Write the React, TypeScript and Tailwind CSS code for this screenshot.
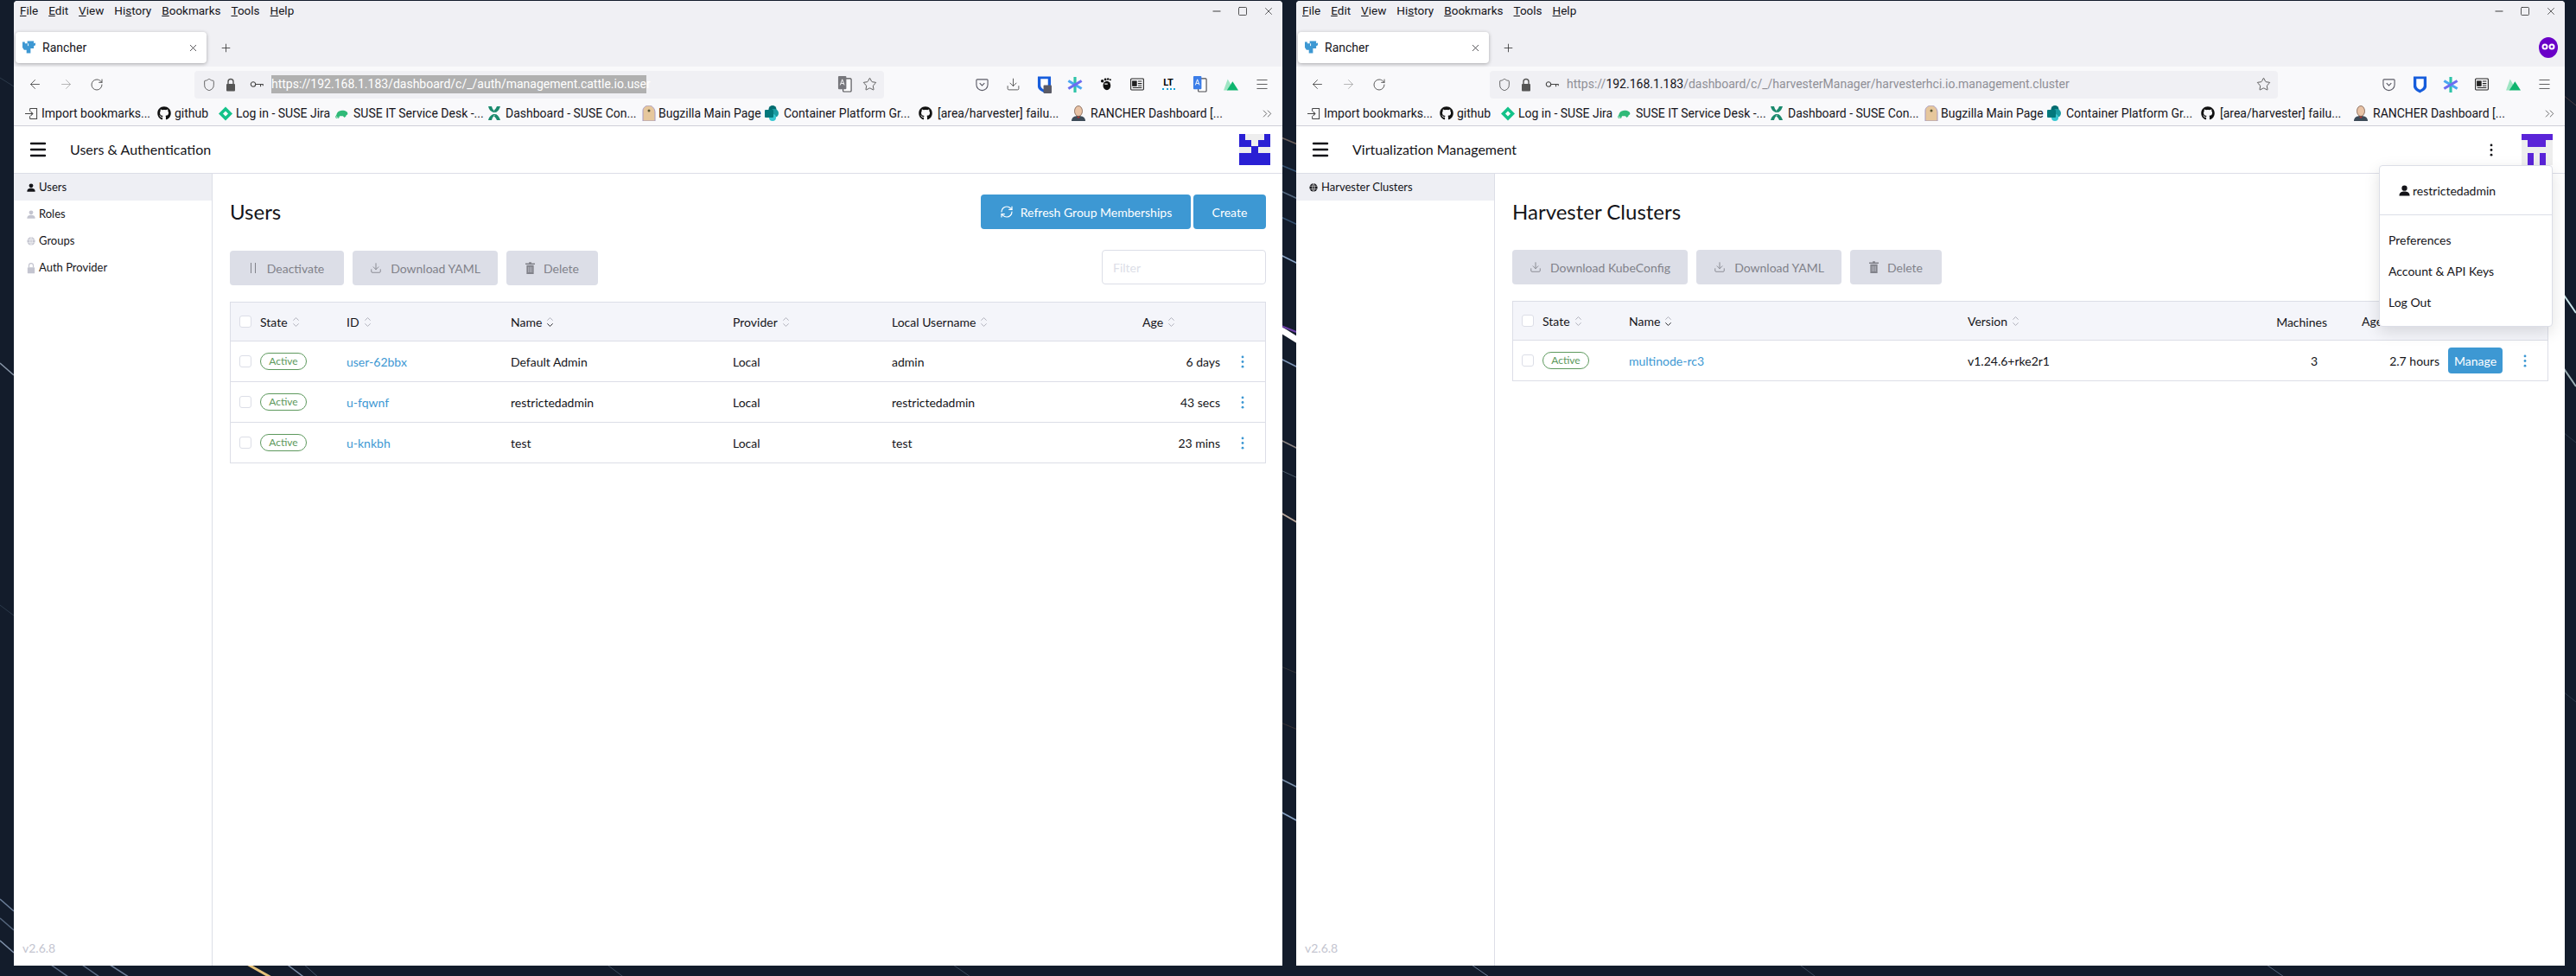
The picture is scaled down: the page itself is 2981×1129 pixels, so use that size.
import type { ReactNode } from 'react'
import { ArrowLeft, ArrowRight, RotateCw, Shield, Star, Download, X, Plus, Minus, Square, ChevronsRight, Menu, RefreshCw } from 'lucide-react'
import { FaGithub } from 'react-icons/fa'

const STREAKS = [
  // middle gap
  [1480, 158, 1504, 168, '#6b5f5c', 1.5], [1480, 190, 1504, 200, '#34506f', 1.5], [1480, 220, 1504, 231, '#54677e', 1.5],
  [1480, 250, 1504, 261, '#34506f', 1.5], [1480, 294, 1504, 306, '#8aa4c6', 1.5], [1480, 380, 1504, 395, '#ffffff', 7],
  [1480, 376, 1500, 384, '#6d3fa8', 2], [1480, 414, 1504, 426, '#7f97b8', 1.5], [1480, 508, 1504, 520, '#8d8584', 1.5],
  [1480, 543, 1504, 554, '#4b5a68', 1], [1480, 592, 1504, 606, '#b9a79c', 2], [1480, 900, 1504, 912, '#7c92ad', 1.5],
  [1480, 938, 1504, 951, '#8aa4c6', 1.5], [1480, 770, 1504, 780, '#33343a', 1], [1480, 835, 1504, 845, '#3a3335', 1],
  // left edge
  [0, 420, 16, 434, '#8896a8', 1.5], [0, 90, 16, 100, '#2c3a4a', 1], [0, 700, 16, 712, '#2c3a4a', 1],
  [0, 1040, 16, 1054, '#6c7f9a', 1.5], [0, 1062, 16, 1076, '#55667d', 1.5], [0, 1088, 16, 1102, '#8192ab', 1.5],
  // right edge
  [2966, 340, 2981, 362, '#c9e4e8', 2], [2966, 425, 2981, 447, '#9db0b5', 2], [2966, 110, 2981, 122, '#4a3d42', 1],
  [2966, 500, 2981, 512, '#2c3a4a', 1], [2966, 800, 2981, 812, '#2c3a4a', 1],
  // bottom edge
  [56, 1114, 82, 1132, '#5b6c85', 1.5], [92, 1114, 118, 1132, '#5b6c85', 1.5], [124, 1114, 152, 1132, '#6d7e97', 1.5],
  [284, 1114, 316, 1132, '#e5c27a', 3], [330, 1114, 354, 1132, '#7d8fa8', 1.5], [350, 1114, 370, 1132, '#44546a', 1],
  [700, 1114, 724, 1132, '#3c4a5c', 1], [1100, 1114, 1126, 1132, '#3c4a5c', 1], [1700, 1114, 1726, 1132, '#6d7e97', 1],
  [2080, 1114, 2104, 1132, '#3c4a5c', 1], [2620, 1114, 2646, 1132, '#55667d', 1],
] as const

const MENU = [
  ['', 'F', 'ile'],
  ['', 'E', 'dit'],
  ['', 'V', 'iew'],
  ['Hi', 's', 'tory'],
  ['', 'B', 'ookmarks'],
  ['', 'T', 'ools'],
  ['', 'H', 'elp'],
]

function Wallpaper() {
  return (
    <svg className="absolute inset-0" width="2981" height="1129" aria-hidden="true">
      {STREAKS.map(([x1, y1, x2, y2, color, width], i) => (
        <line key={i} x1={x1} y1={y1} x2={x2} y2={y2} stroke={color} strokeWidth={width} />
      ))}
    </svg>
  )
}

function Person({ className = '' }: { className?: string }) {
  return (
    <svg viewBox="0 0 14 14" className={className} fill="currentColor" aria-hidden="true">
      <circle cx="7" cy="4" r="3.4" />
      <path d="M0.5 13.5 C0.5 9.5 3.5 8.2 7 8.2 C10.5 8.2 13.5 9.5 13.5 13.5 Z" />
    </svg>
  )
}

function GlobeIcon({ className = '' }: { className?: string }) {
  return (
    <svg viewBox="0 0 14 14" className={className} fill="currentColor" aria-hidden="true">
      <circle cx="7" cy="7" r="6.5" />
      <path d="M0.5 4.6H13.5M0.5 9.4H13.5M7 .5V13.5M7 .5C4 3.5 4 10.5 7 13.5M7 .5C10 3.5 10 10.5 7 13.5" stroke="#fff" strokeWidth=".7" fill="none" />
    </svg>
  )
}

function LockIcon({ className = '' }: { className?: string }) {
  return (
    <svg viewBox="0 0 12 16" className={className} fill="currentColor" aria-hidden="true">
      <rect x="1" y="7" width="10" height="8.5" rx="1" />
      <path d="M3 7V4.5a3 3 0 0 1 6 0V7" fill="none" stroke="currentColor" strokeWidth="1.4" />
    </svg>
  )
}

function TrashIcon() {
  return (
    <svg viewBox="0 0 12 15" className="mr-[10px] h-[14px] w-[11px]" fill="currentColor" aria-hidden="true">
      <path d="M4.500 0h3v1.500H12V3H0V1.500h4.500ZM1.500 4h9v11h-9Z" />
      <path d="M4 6v7M6 6v7M8 6v7" stroke="#dcdee7" strokeWidth=".6" />
    </svg>
  )
}

function PauseIcon() {
  return (
    <svg viewBox="0 0 8 12" className="mr-[12px] h-[12px] w-[8px]" stroke="currentColor" strokeWidth="1" aria-hidden="true">
      <path d="M1.500 0v12M6.500 0v12" />
    </svg>
  )
}

function RancherFavicon() {
  return (
    <svg viewBox="0 0 16 18" className="h-[18px] w-[15px] shrink-0" aria-hidden="true">
      <path d="M0 2h3v2h3V1h8v3l2-1v3l-2 1v3H10v6H5v-4H2L0 9Z" fill="#3d98d3" />
      <path d="M7 4v3" stroke="#fff" strokeWidth="1" />
    </svg>
  )
}

function TranslateIcon({ blue = false }: { blue?: boolean }) {
  return (
    <svg viewBox="0 0 18 22" className="h-[21px] w-[17px]" aria-hidden="true">
      <rect x="7" y="4" width="10" height="16" rx="1" fill="#fff" stroke="#4a4a4f" strokeWidth="1.2" />
      <rect x="1" y="1" width="10" height="16" rx="1" fill={blue ? '#3b7de8' : '#77777c'} />
      <path d="M3.5 12 6 5l2.5 7M4.5 10h3" stroke="#fff" strokeWidth="1" fill="none" />
    </svg>
  )
}

function Bitwarden({ locked = false }: { locked?: boolean }) {
  return (
    <svg viewBox="0 0 18 22" className="h-[23px] w-[17px]" aria-hidden="true">
      <path d="M1 1.5h16v12c0 4-4 6-8 8-4-2-8-4-8-8Z" fill="#175ddc" />
      <path d="M4.5 4.5h9v8c0 2.5-2.5 4-4.5 5-2-1-4.5-2.5-4.5-5Z" fill="#fff" />
      {locked && <rect x="8" y="12" width="10" height="10" rx="1" fill="#5b5b66" />}
    </svg>
  )
}

function Asterisk() {
  return (
    <svg viewBox="0 0 20 20" className="h-5 w-[18px]" aria-hidden="true">
      <path d="M10 0v20" stroke="#2fc4a8" strokeWidth="3.5" />
      <path d="M1.5 5 18.5 15" stroke="#4aa8f0" strokeWidth="3.5" />
      <path d="M18.5 5 1.5 15" stroke="#6c6cf0" strokeWidth="3.5" />
    </svg>
  )
}

function Footprint() {
  return (
    <svg viewBox="0 0 16 20" className="h-5 w-[14px]" fill="#111" aria-hidden="true">
      <ellipse cx="9" cy="11" rx="5" ry="6" />
      <circle cx="3" cy="5" r="2" /><circle cx="7" cy="3" r="1.6" /><circle cx="10.5" cy="2.5" r="1.4" /><circle cx="13.5" cy="3.5" r="1.2" />
      <path d="M6 9h4" stroke="#fff" strokeWidth="1.5" />
    </svg>
  )
}

function Reader() {
  return (
    <svg viewBox="0 0 18 16" className="h-[15px] w-[16px]" fill="none" stroke="#222" strokeWidth="1.2" aria-hidden="true">
      <rect x=".7" y=".7" width="16.6" height="14.6" rx="1" />
      <rect x="3" y="4" width="5" height="6" fill="#222" />
      <path d="M10 4h5M10 7h5M10 10h5M3 12.5h12" />
    </svg>
  )
}

function Triangles() {
  return (
    <svg viewBox="0 0 18 14" className="h-[14px] w-[17px]" aria-hidden="true">
      <path d="M5 0 9 7 5 14H0Z" fill="#9fe6c4" />
      <path d="M11 3 18 14H4Z" fill="#0fb56f" />
    </svg>
  )
}

function Pocket() {
  return (
    <svg viewBox="0 0 16 16" className="h-[16px] w-[15px]" fill="none" stroke="#5b5b66" strokeWidth="1.2" aria-hidden="true">
      <path d="M2 1.5h12a1 1 0 0 1 1 1V8a7 7 0 0 1-14 0V2.500a1 1 0 0 1 1-1Z" />
      <path d="M5 6l3 3 3-3" />
    </svg>
  )
}

function Confluence() {
  return (
    <svg viewBox="0 0 16 18" className="h-[18px] w-[16px] shrink-0" aria-hidden="true">
      <path d="M1 1h4c1 4 3 5 5 7h-3C4 7 2 5 1 1ZM15 1h-4C10 3 9 5 7 6l3 2c3-2 4-4 5-7ZM1 17h4c1-4 3-5 5-7H7c-3 1-5 3-6 7ZM15 17h-4c-1-2-2-4-4-5l3-2c3 2 4 4 5 7Z" fill="#1a8a6d" />
    </svg>
  )
}

const BOOKMARKS: { label: string; width: string; icon: ReactNode; gap: string }[] = [
  {
    label: 'Import bookmarks...',
    width: 'w-[153px]',
    gap: 'gap-[4px]',
    icon: (
      <svg viewBox="0 0 16 16" className="h-[15px] w-[15px] shrink-0" fill="none" stroke="#444" strokeWidth="1.1" aria-hidden="true">
        <path d="M6 1.500h8.500v13H6M6 5V1.500M6 11v3.500M0 8h9.500M7 5.500 9.500 8 7 10.500" />
      </svg>
    ),
  },
  { label: 'github', width: 'w-[71px]', gap: 'gap-[4px]', icon: <FaGithub className="h-4 w-4 shrink-0 text-[#111]" /> },
  {
    label: 'Log in - SUSE Jira',
    width: 'w-[134px]',
    gap: 'gap-[4px]',
    icon: (
      <svg viewBox="0 0 16 16" className="h-[17px] w-4 shrink-0" aria-hidden="true">
        <path d="M8 0l8 8-8 8-8-8Z" fill="#14c28a" />
        <path d="M8 5l3 3-3 3-3-3Z" fill="#fff" />
      </svg>
    ),
  },
  {
    label: 'SUSE IT Service Desk -...',
    width: 'w-[177px]',
    gap: 'gap-[6px]',
    icon: (
      <svg viewBox="0 0 16 12" className="h-[11px] w-4 shrink-0" aria-hidden="true">
        <path d="M2 10C1 6 4 2 9 2s7 2 7 4-2 1-2 3l-2 2-2-2H6l-2 2Z" fill="#30ba78" />
        <circle cx="3" cy="10" r="2" fill="none" stroke="#30ba78" />
      </svg>
    ),
  },
  { label: 'Dashboard - SUSE Con...', width: 'w-[179px]', gap: 'gap-[5px]', icon: <Confluence /> },
  {
    label: 'Bugzilla Main Page',
    width: 'w-[142px]',
    gap: 'gap-[3px]',
    icon: (
      <svg viewBox="0 0 16 18" className="h-[18px] w-4 shrink-0" aria-hidden="true">
        <path d="M1 18 1 6C1 2 5 0 8 0s7 3 7 8v10Z" fill="#e6c79c" stroke="#a79ac0" />
        <circle cx="8" cy="6" r="1.500" fill="#553" />
      </svg>
    ),
  },
  {
    label: 'Container Platform Gr...',
    width: 'w-[178px]',
    gap: 'gap-[6px]',
    icon: (
      <svg viewBox="0 0 16 18" className="h-[18px] w-4 shrink-0" aria-hidden="true">
        <circle cx="9" cy="4.500" r="4.500" fill="#036c70" />
        <circle cx="11" cy="9" r="5" fill="#1a9ba1" />
        <circle cx="9" cy="14" r="4" fill="#37c6d0" />
        <rect x="0" y="5" width="10" height="9" rx="1" fill="#03787c" />
      </svg>
    ),
  },
  { label: '[area/harvester] failu...', width: 'w-[177px]', gap: 'gap-[6px]', icon: <FaGithub className="h-4 w-4 shrink-0 text-[#111]" /> },
  {
    label: 'RANCHER Dashboard [...',
    width: 'w-[217px]',
    gap: 'gap-[6px]',
    icon: (
      <svg viewBox="0 0 16 18" className="h-[18px] w-4 shrink-0" aria-hidden="true">
        <path d="M0 18c0-4 3-6 8-6s8 2 8 6Z" fill="#3d4b58" />
        <ellipse cx="8" cy="6.500" rx="4.500" ry="6" fill="#e8c3a6" stroke="#6b4a3a" strokeWidth=".7" />
        <path d="M6 13h4l-2 2Z" fill="#b03030" />
      </svg>
    ),
  },
]

function ToolbarIcon({ children }: { children: ReactNode }) {
  return <div className="flex h-8 w-9 shrink-0 items-center justify-center">{children}</div>
}

function BrowserChrome({ side }: { side: 'left' | 'right' }) {
  const left = side === 'left'
  return (
    <div className="font-['Roboto',sans-serif] text-[#15141a]">
      {/* title bar and tab strip */}
      <div className="relative h-[76px] rounded-t bg-[#f0f0f4]">
        <div className="flex h-6 items-center gap-[12px] pl-[7px] text-[13.5px] leading-none">
          {MENU.map(([before, key, after]) => (
            <span key={before + key + after}>
              {before}
              <u>{key}</u>
              {after}
            </span>
          ))}
          <div className="ml-auto mr-[9px] flex items-center gap-[17px] text-[#222]">
            <Minus size={14} strokeWidth={1.5} />
            <Square size={12} strokeWidth={1.5} />
            <X size={14} strokeWidth={1.2} />
          </div>
        </div>
        <div className="mt-3 flex items-center">
          <div className="ml-[2px] flex h-9 w-[221px] items-center rounded bg-white pl-[8px] pr-[9px] text-[14px] shadow-[0_1px_4px_rgba(0,0,0,0.3)]">
            <RancherFavicon />
            <span className="ml-[8px]">Rancher</span>
            <X size={13} strokeWidth={1.3} className="ml-auto" />
          </div>
          <Plus size={15} strokeWidth={1.3} className="ml-[15px] text-[#333]" />
          {!left && (
            <svg viewBox="0 0 22 24" className="ml-auto mr-[8px] h-6 w-[22px]" aria-hidden="true">
              <ellipse cx="11" cy="12" rx="11" ry="12" fill="#6a00c8" />
              <circle cx="7" cy="11" r="3.500" fill="#fff" />
              <circle cx="15" cy="11" r="3.500" fill="#fff" />
              <circle cx="7" cy="11" r="1.500" fill="#6a00c8" />
              <circle cx="15" cy="11" r="1.500" fill="#6a00c8" />
            </svg>
          )}
        </div>
      </div>

      {/* nav bar */}
      <div className="flex h-[40px] items-center bg-[#f9f9fb] pl-[6px] pr-[6px] pt-[1px]">
        <ToolbarIcon><ArrowLeft size={17} strokeWidth={1.2} className="text-[#444]" /></ToolbarIcon>
        <ToolbarIcon><ArrowRight size={17} strokeWidth={1.2} className="text-[#aaa]" /></ToolbarIcon>
        <ToolbarIcon><RotateCw size={16} strokeWidth={1.3} className="text-[#444]" /></ToolbarIcon>
        <div className={`${left ? 'ml-[95px] w-[798px]' : 'ml-[110px] w-[912px]'} flex h-8 items-center rounded bg-[#f0f0f4] text-[14px]`}>
          <Shield size={16} strokeWidth={1.2} className="ml-[9px] text-[#444]" />
          <LockIcon className="ml-[11px] h-[16px] w-[12px] text-[#555]" />
          <svg viewBox="0 0 18 10" className="ml-[16px] h-[9px] w-[17px]" fill="none" stroke="#444" strokeWidth="1.2" aria-hidden="true">
            <circle cx="4" cy="5" r="3" />
            <path d="M7 5h10M13.500 5v3M16.500 5v2" />
          </svg>
          {left ? (
            <span className="ml-[8px] w-[434px] whitespace-nowrap bg-[#b0b0b0] text-white">https://192.168.1.183/dashboard/c/_/auth/management.cattle.io.user</span>
          ) : (
            <span className="ml-[8px] w-[578px] whitespace-nowrap text-[#8f8f96]">
              https://<span className="text-[#15141a]">192.168.1.183</span>/dashboard/c/_/harvesterManager/harvesterhci.io.management.cluster
            </span>
          )}
          <div className="ml-auto mr-[8px] flex items-center gap-[12px]">
            {left && <TranslateIcon />}
            <Star size={17} strokeWidth={1.2} className="text-[#444]" />
          </div>
        </div>
        <div className="ml-auto flex items-center">
          <ToolbarIcon><Pocket /></ToolbarIcon>
          {left && <ToolbarIcon><Download size={17} strokeWidth={1.2} className="text-[#444]" /></ToolbarIcon>}
          <ToolbarIcon><Bitwarden locked={left} /></ToolbarIcon>
          <ToolbarIcon><Asterisk /></ToolbarIcon>
          {left && <ToolbarIcon><Footprint /></ToolbarIcon>}
          <ToolbarIcon><Reader /></ToolbarIcon>
          {left && (
            <ToolbarIcon>
              <div className="flex flex-col items-center text-[11px] font-bold leading-[10px] text-black">
                LT
                <span className="h-[3px] w-[15px] border-b-2 border-dotted border-[#1aa3d8]" />
              </div>
            </ToolbarIcon>
          )}
          {left && <ToolbarIcon><TranslateIcon blue /></ToolbarIcon>}
          <ToolbarIcon><Triangles /></ToolbarIcon>
          <ToolbarIcon><Menu size={17} strokeWidth={1.2} className="text-[#444]" /></ToolbarIcon>
        </div>
      </div>

      {/* bookmarks bar */}
      <div className="flex h-[29px] items-center border-b border-[#cfcfd8] bg-[#f9f9fb] pl-[13px] text-[14px]">
        {BOOKMARKS.map((b) => (
          <div key={b.label} className={`${b.width} ${b.gap} flex shrink-0 items-center whitespace-nowrap`}>
            {b.icon}
            <span>{b.label}</span>
          </div>
        ))}
        <ChevronsRight size={17} strokeWidth={1.1} className="ml-auto mr-[9px] text-[#444]" />
      </div>
    </div>
  )
}

function Btn({ icon, children, className }: { icon?: ReactNode; children: ReactNode; className: string }) {
  return (
    <button type="button" className={`flex h-10 items-center justify-center rounded bg-[#dcdee7] text-[14px] text-[#81828a] ${className}`}>
      {icon}
      {children}
    </button>
  )
}

function SortIcon({ active = false }: { active?: boolean }) {
  return (
    <svg viewBox="0 0 10 14" className="ml-[5px] h-[13px] w-[9px] shrink-0" fill="none" strokeWidth="1" aria-hidden="true">
      <path d="M1.500 5 5 1.500 8.500 5" stroke="#a9aab5" />
      <path d="M1.500 9 5 12.500 8.500 9" stroke={active ? '#141419' : '#a9aab5'} />
    </svg>
  )
}

function Head({ label, active }: { label: string; active?: boolean }) {
  return (
    <div className="flex items-center">
      {label}
      <SortIcon active={active} />
    </div>
  )
}

function Check() {
  return (
    <div className="flex items-center pl-[10px]">
      <div className="h-[14px] w-[14px] rounded-[3px] border border-[#dcdee7] bg-white" />
    </div>
  )
}

function ActiveBadge() {
  return (
    <div className="flex h-5 w-[54px] items-center justify-center rounded-[10px] border border-[#5d995d] text-[12px] leading-none text-[#5d995d]">
      Active
    </div>
  )
}

function Kebab() {
  return (
    <svg viewBox="0 0 4 16" className="h-[15px] w-[4px]" fill="currentColor" aria-hidden="true">
      <circle cx="2" cy="2" r="1.500" />
      <circle cx="2" cy="8" r="1.500" />
      <circle cx="2" cy="14" r="1.500" />
    </svg>
  )
}

const USER_ROWS = [
  { id: 'user-62bbx', name: 'Default Admin', username: 'admin', age: '6 days' },
  { id: 'u-fqwnf', name: 'restrictedadmin', username: 'restrictedadmin', age: '43 secs' },
  { id: 'u-knkbh', name: 'test', username: 'test', age: '23 mins' },
]

const USER_COLS = 'grid grid-cols-[34px_100px_190px_257px_184px_290px_90px_52px] items-center'
const CLUSTER_COLS = 'grid grid-cols-[34px_100px_392px_200px_256px_90px_125px] items-center'

function SideItem({ label, icon, active, muted }: { label: string; icon: ReactNode; active?: boolean; muted?: boolean }) {
  return (
    <div className={`flex h-[31px] items-center pl-[15px] pt-[1px] text-[13px] ${active ? 'bg-[#eeeff4]' : ''} ${muted ? 'text-[#c4c5d0]' : 'text-[#141419]'}`}>
      {icon}
      <span className="ml-[4px] text-[#141419]">{label}</span>
    </div>
  )
}

function RancherHeader({ title, children }: { title: string; children: ReactNode }) {
  return (
    <div className="flex h-[55px] items-center border-b border-[#dcdee7] bg-white">
      <Menu size={24} strokeWidth={2.4} className="ml-[16px] text-[#141419]" />
      <span className="ml-[25px] text-[16px]">{title}</span>
      {children}
    </div>
  )
}

function Shell({ children, sidebar, header, side }: { children: ReactNode; sidebar: ReactNode; header: ReactNode; side: 'left' | 'right' }) {
  return (
    <div className="relative flex h-[1116px] w-[1468px] shrink-0 flex-col overflow-hidden rounded-t bg-white">
      <BrowserChrome side={side} />
      <div className="flex min-h-0 flex-1 flex-col font-['Lato',sans-serif] text-[#141419]">
        {header}
        <div className="flex min-h-0 flex-1">
          <div className="relative w-[230px] shrink-0 border-r border-[#dcdee7]">
            {sidebar}
            <span className="absolute bottom-[10px] left-[10px] text-[14px] text-[#c4c5d0]">v2.6.8</span>
          </div>
          <div className="min-w-0 flex-1 pl-[20px] pr-[18px]">{children}</div>
        </div>
      </div>
    </div>
  )
}

function UsersWindow() {
  return (
    <Shell
      side="left"
      header={
        <RancherHeader title="Users & Authentication">
          <svg viewBox="0 0 36 36" className="ml-auto mr-[14px] h-9 w-9" aria-hidden="true">
            <rect width="36" height="36" fill="#2a20d4" />
            <path d="M7 0H29V7H22V14H14V7H7Z" fill="#eeeeee" />
            <rect y="15" width="14" height="7" fill="#eeeeee" />
            <rect x="22" y="15" width="14" height="7" fill="#eeeeee" />
          </svg>
        </RancherHeader>
      }
      sidebar={
        <>
          <SideItem active label="Users" icon={<Person className="h-[10px] w-[10px]" />} />
          <SideItem muted label="Roles" icon={<Person className="h-[10px] w-[10px]" />} />
          <SideItem muted label="Groups" icon={<GlobeIcon className="h-[10px] w-[10px]" />} />
          <SideItem muted label="Auth Provider" icon={<LockIcon className="h-[14px] w-[10px]" />} />
        </>
      }
    >
      <div className="mt-[24px] flex h-10 items-center">
        <h1 className="text-[24px] font-normal">Users</h1>
        <div className="ml-auto mr-[1px] flex gap-[3px]">
          <button type="button" className="flex h-10 w-[243px] items-center justify-center rounded bg-[#3d98d3] text-[14px] text-white">
            <RefreshCw size={16} strokeWidth={1.8} className="mr-[8px]" />
            Refresh Group Memberships
          </button>
          <button type="button" className="h-10 w-[84px] rounded bg-[#3d98d3] text-[14px] text-white">Create</button>
        </div>
      </div>
      <div className="mt-[25px] flex items-center">
        <Btn className="w-[132px]" icon={<PauseIcon />}>Deactivate</Btn>
        <Btn className="ml-[10px] w-[168px]" icon={<Download size={14} strokeWidth={1.5} className="mr-[10px]" />}>Download YAML</Btn>
        <Btn className="ml-[10px] w-[106px]" icon={<TrashIcon />}>Delete</Btn>
        <input
          placeholder="Filter"
          className="ml-auto mr-[1px] h-10 w-[190px] -translate-y-px rounded border border-[#dcdee7] px-3 text-[14px] outline-none placeholder:text-[#dcdee7]"
        />
      </div>
      <div className="mt-[19px] w-[1199px] border border-b-0 border-[#dcdee7] text-[14px]">
        <div className={`${USER_COLS} h-[45px] border-b border-[#dcdee7] bg-[#f4f5fa]`}>
          <Check />
          <Head label="State" />
          <Head label="ID" />
          <Head label="Name" active />
          <Head label="Provider" />
          <Head label="Local Username" />
          <Head label="Age" />
          <div />
        </div>
        {USER_ROWS.map((r) => (
          <div key={r.id} className={`${USER_COLS} h-[47px] border-b border-[#dcdee7]`}>
            <Check />
            <ActiveBadge />
            <span className="text-[#3d98d3]">{r.id}</span>
            <span>{r.name}</span>
            <span>Local</span>
            <span>{r.username}</span>
            <span className="text-right">{r.age}</span>
            <div className="flex justify-center text-[#3d98d3]"><Kebab /></div>
          </div>
        ))}
      </div>
    </Shell>
  )
}

function ClustersWindow() {
  return (
    <Shell
      side="right"
      header={
        <RancherHeader title="Virtualization Management">
          <div className="ml-auto text-[#141419]"><Kebab /></div>
          <svg viewBox="0 0 36 36" className="ml-[33px] mr-[14px] h-9 w-9" aria-hidden="true">
            <rect width="36" height="36" fill="#eeeeee" />
            <path d="M0 0H36V7H28V15H7V7H0Z" fill="#5a24d8" />
            <rect x="7" y="22" width="7" height="14" fill="#5a24d8" />
            <rect x="21" y="22" width="7" height="14" fill="#5a24d8" />
          </svg>
        </RancherHeader>
      }
      sidebar={<SideItem active label="Harvester Clusters" icon={<GlobeIcon className="h-[10px] w-[10px]" />} />}
    >
      <div className="mt-[24px] flex h-10 items-center">
        <h1 className="text-[24px] font-normal">Harvester Clusters</h1>
      </div>
      <div className="mt-[24px] flex items-center">
        <Btn className="w-[203px]" icon={<Download size={14} strokeWidth={1.5} className="mr-[10px]" />}>Download KubeConfig</Btn>
        <Btn className="ml-[10px] w-[168px]" icon={<Download size={14} strokeWidth={1.5} className="mr-[10px]" />}>Download YAML</Btn>
        <Btn className="ml-[10px] w-[106px]" icon={<TrashIcon />}>Delete</Btn>
      </div>
      <div className="mt-[19px] w-[1199px] border border-b-0 border-[#dcdee7] text-[14px]">
        <div className={`${CLUSTER_COLS} h-[45px] border-b border-[#dcdee7] bg-[#f4f5fa]`}>
          <Check />
          <Head label="State" />
          <Head label="Name" active />
          <Head label="Version" />
          <span className="pr-[40px] pt-[3px] text-right">Machines</span>
          <Head label="Age" />
          <div />
        </div>
        <div className={`${CLUSTER_COLS} h-[47px] border-b border-[#dcdee7]`}>
          <Check />
          <ActiveBadge />
          <span className="text-[#3d98d3]">multinode-rc3</span>
          <span>v1.24.6+rke2r1</span>
          <span className="pr-[51px] text-right">3</span>
          <span className="text-right">2.7 hours</span>
          <div className="flex items-center pl-[10px]">
            <button type="button" className="h-[30px] w-[63px] rounded bg-[#3d98d3] text-white">Manage</button>
            <div className="ml-[24px] text-[#3d98d3]"><Kebab /></div>
          </div>
        </div>
      </div>

      <div className="absolute left-[1253px] top-[190px] w-[201px] rounded border border-[#dcdee7] bg-white text-[14px] text-[#141419] shadow-[0_6px_18px_rgba(0,0,0,0.12)]">
        <div className="flex h-[57px] items-center border-b border-[#dcdee7] pl-[22px]">
          <Person className="h-[13px] w-[13px]" />
          <span className="ml-[3px]">restrictedadmin</span>
        </div>
        <div className="py-[10px] pl-[10px]">
          <div className="flex h-9 items-center">Preferences</div>
          <div className="flex h-9 items-center">Account &amp; API Keys</div>
          <div className="flex h-9 items-center">Log Out</div>
        </div>
      </div>
    </Shell>
  )
}

export default function App() {
  return (
    <div className="relative h-[1129px] w-[2981px] overflow-hidden bg-[#131c2b]">
      <Wallpaper />
      <div className="relative flex gap-4 pl-4 pt-[1px]">
        <UsersWindow />
        <ClustersWindow />
      </div>
    </div>
  )
}
